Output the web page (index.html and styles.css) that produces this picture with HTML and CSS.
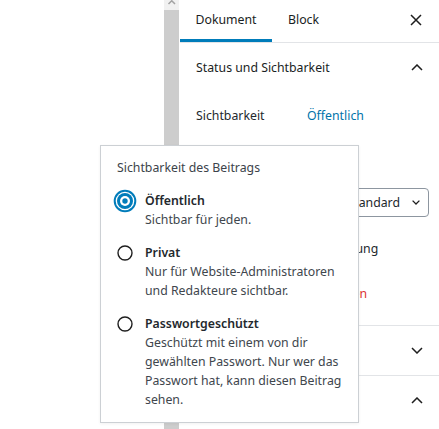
FILE: index.html
```html
<!DOCTYPE html>
<html lang="de">
<head>
<meta charset="utf-8">
<title>Sichtbarkeit</title>
<link rel="stylesheet" href="styles.css">
</head>
<body>
<div class="screen">
  <div class="editor"></div>
  <div class="scrollbar">
    <div class="scroll-up">
      <svg width="15" height="10" viewBox="0 0 15 10"><polyline points="4.5,4 7.75,0.75 11,4" fill="none" stroke="#a3a3a3" stroke-width="1.5"/></svg>
    </div>
  </div>
  <aside class="sidebar">
    <div class="tabs">
      <div class="tab tab-active">Dokument</div>
      <div class="tab">Block</div>
      <div class="close">
        <svg width="12" height="12" viewBox="0 0 12 12"><path d="M1 1L11 11M11 1L1 11" fill="none" stroke="#1e1e1e" stroke-width="1.5"/></svg>
      </div>
    </div>
    <section class="panel">
      <div class="panel-head">
        <span>Status und Sichtbarkeit</span>
        <svg width="12" height="7" viewBox="0 0 12 7"><polyline points="1,6 6,1 11,6" fill="none" stroke="#1e1e1e" stroke-width="1.5"/></svg>
      </div>
      <div class="panel-body">
        <div class="row">
          <span class="row-label">Sichtbarkeit</span>
          <span class="link">Öffentlich</span>
        </div>
        <div class="row row-publish"></div>
        <div class="row row-format">
          <div class="select">
            <span>Standard</span>
            <svg width="8" height="5" viewBox="0 0 8 5"><polyline points="0.6,0.6 4,4 7.4,0.6" fill="none" stroke="#1e1e1e" stroke-width="1.3"/></svg>
          </div>
        </div>
        <div class="row row-check">
          <span class="checkbox"></span>
          <span>Ausstehende Überprüfung</span>
        </div>
        <div class="row row-trash">
          <span class="trash">In den Papierkorb verschieben</span>
        </div>
      </div>
    </section>
    <section class="panel">
      <div class="panel-head">
        <span></span>
        <svg width="12" height="7" viewBox="0 0 12 7"><polyline points="1,1 6,6 11,1" fill="none" stroke="#1e1e1e" stroke-width="1.5"/></svg>
      </div>
    </section>
    <section class="panel">
      <div class="panel-head">
        <span></span>
        <svg width="12" height="7" viewBox="0 0 12 7"><polyline points="1,6 6,1 11,6" fill="none" stroke="#1e1e1e" stroke-width="1.5"/></svg>
      </div>
    </section>
  </aside>

  <div class="popover">
    <div class="pop-title">Sichtbarkeit des Beitrags</div>
    <div class="option">
      <svg class="radio radio-checked" width="24" height="24" viewBox="0 0 24 24">
        <circle cx="12" cy="12" r="10.3" fill="none" stroke="#007cba" stroke-width="2"/>
        <circle cx="12" cy="12" r="8" fill="#007cba"/>
        <circle cx="12" cy="12" r="5" fill="#fff"/>
        <circle cx="12" cy="12" r="2.7" fill="#007cba"/>
      </svg>
      <div class="opt-text">
        <div class="opt-label">Öffentlich</div>
        <div class="opt-desc">Sichtbar für jeden.</div>
      </div>
    </div>
    <div class="option">
      <svg class="radio" width="16" height="16" viewBox="0 0 16 16"><circle cx="8" cy="8" r="7" fill="#fff" stroke="#1e1e1e" stroke-width="1.4"/></svg>
      <div class="opt-text">
        <div class="opt-label">Privat</div>
        <div class="opt-desc">Nur für Website-Administratoren<br>und Redakteure sichtbar.</div>
      </div>
    </div>
    <div class="option">
      <svg class="radio" width="16" height="16" viewBox="0 0 16 16"><circle cx="8" cy="8" r="7" fill="#fff" stroke="#1e1e1e" stroke-width="1.4"/></svg>
      <div class="opt-text">
        <div class="opt-label">Passwortgeschützt</div>
        <div class="opt-desc">Geschützt mit einem von dir<br>gewählten Passwort. Nur wer das<br>Passwort hat, kann diesen Beitrag<br>sehen.</div>
      </div>
    </div>
  </div>
</div>
</body>
</html>
```

FILE: styles.css
```css
* { box-sizing: border-box; }
html, body { margin: 0; padding: 0; background: #fff; }
body {
  font-family: "Noto Sans", "Open Sans", sans-serif;
  font-size: 12.3px;
  color: #23282d;
}
.screen {
  position: relative;
  display: flex;
  width: 439px;
  height: 429px;
  overflow: hidden;
}
.editor { flex: 0 0 164px; }
.scrollbar {
  flex: 0 0 15px;
  margin-right: 1px;
  background: #cdcdcd;
}
.scroll-up {
  height: 10px;
  background: #f1f1f1;
}
.scroll-up svg { display: block; }
.sidebar { flex: 1 1 auto; min-width: 0; }

.tabs {
  display: flex;
  height: 43px;
  border-bottom: 1px solid #e2e4e7;
}
.tab {
  display: flex;
  align-items: center;
  padding: 0 16px 3px;
  color: #191e23;
}
.tab-active {
  width: 92px;
  justify-content: center;
  padding: 0 0 3px;
  box-shadow: inset 0 -3px 0 #007cba;
}
.close {
  margin-left: auto;
  margin-right: 11px;
  width: 24px;
  display: flex;
  align-items: center;
  justify-content: center;
  padding-bottom: 3px;
}
.close svg { display: block; }

.panel + .panel { border-top: 1px solid #e2e4e7; }
.panel-head {
  height: 49px;
  padding: 0 16px;
  display: flex;
  align-items: center;
  justify-content: space-between;
  color: #191e23;
}
.panel-head svg { display: block; }
.panel-body {
  display: flex;
  flex-direction: column;
  padding: 8px 0 17px;
}
.row {
  height: 30px;
  display: flex;
  align-items: center;
  padding: 0 16px;
}
.row-label { flex: 0 0 111px; }
.link { color: #0073aa; }
.row-publish { margin-top: 14px; }
.row-format {
  margin-top: 14px;
  justify-content: flex-end;
  padding-right: 10px;
  align-items: flex-start;
}
.select {
  height: 29px;
  display: flex;
  align-items: center;
  gap: 12px;
  padding: 0 8px;
  border: 1px solid #8d96a0;
  border-radius: 4px;
  color: #23282d;
}
.select svg { display: block; }
.row-check { margin-top: 15px; gap: 12px; }
.checkbox {
  width: 16px;
  height: 16px;
  border: 1px solid #7e8993;
  border-radius: 2px;
}
.row-trash { margin-top: 15px; padding-left: 10px; }
.trash { color: #dc3232; }

.popover {
  position: absolute;
  left: 100px;
  top: 145px;
  width: 259px;
  background: #fff;
  border: 1px solid #ccd0d4;
  box-shadow: 0 1px 3px rgba(0, 0, 0, 0.06);
  padding: 12px 16px 13px;
  line-height: 19px;
}
.pop-title { color: #3c434a; }
.option {
  display: flex;
  margin-top: 14px;
}
.radio {
  flex: 0 0 16px;
  display: block;
  margin: 1.5px 12px 0 0;
}
.radio-checked {
  flex: 0 0 24px;
  margin: -2.5px 8px 0 -4px;
}
.opt-text { white-space: nowrap; }
.opt-label { font-weight: 600; color: #23282d; }
.opt-desc { color: #40464d; }
```
